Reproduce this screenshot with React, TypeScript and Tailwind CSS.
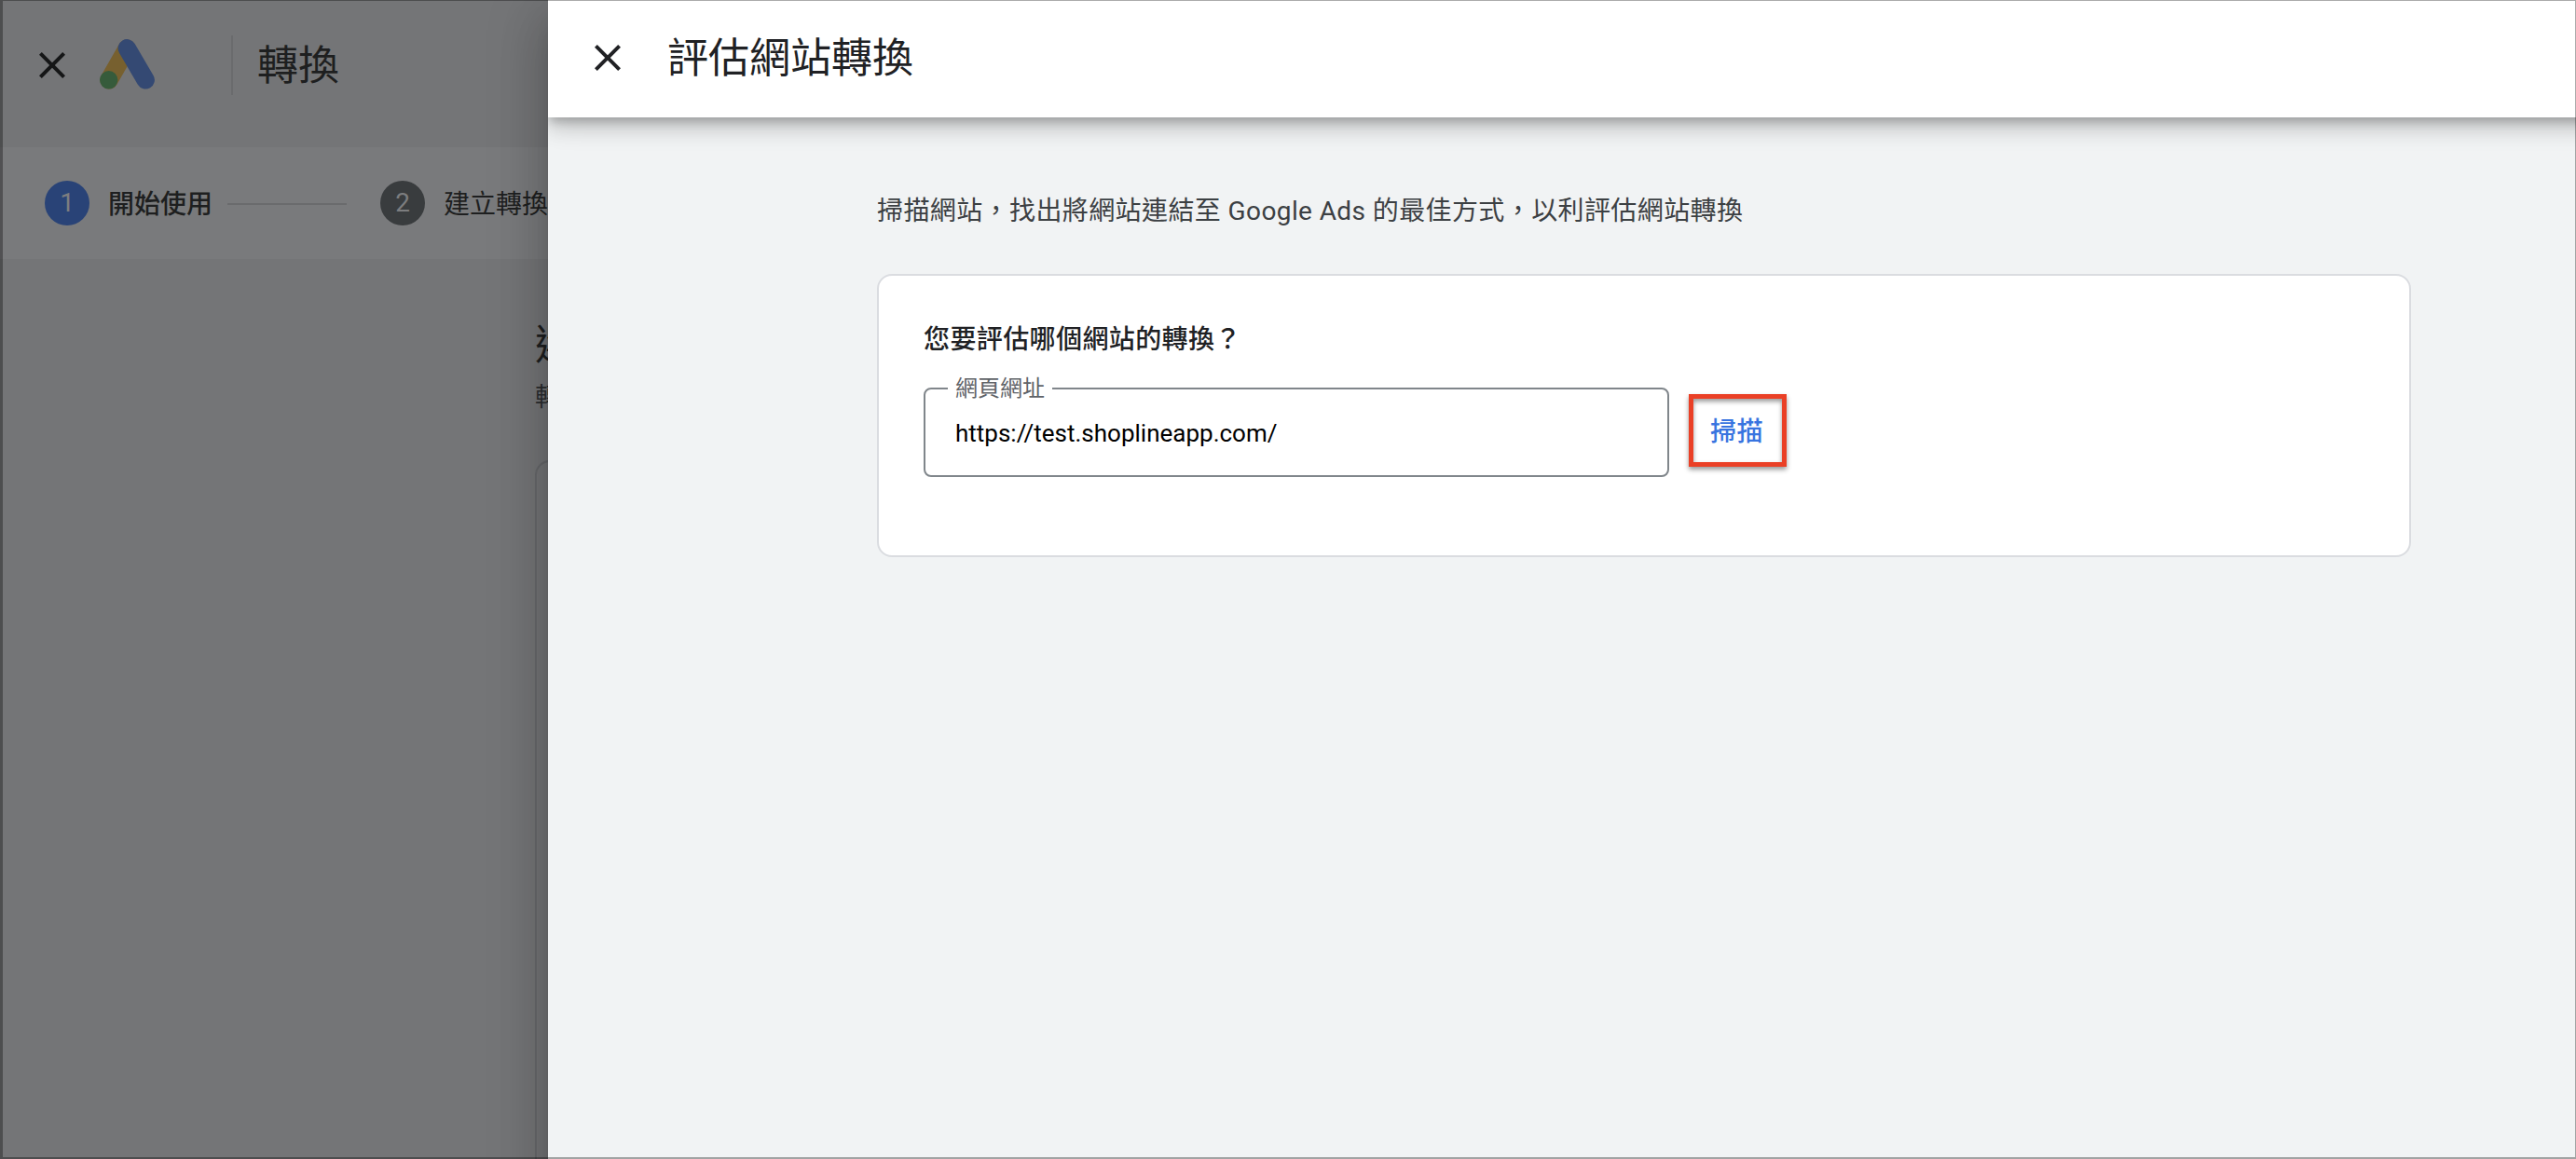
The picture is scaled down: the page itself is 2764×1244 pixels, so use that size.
import clsx from "clsx";

const steps = [
  { id: 1, label: "開始使用", active: true },
  { id: 2, label: "建立轉換", active: false },
];

function CloseIcon({ className }: { className?: string }) {
  return (
    <svg viewBox="0 0 24 24" className={clsx("w-12 h-12 shrink-0", className)} fill="currentColor">
      <path d="M19 6.41L17.59 5 12 10.59 6.41 5 5 6.41 10.59 12 5 17.59 6.41 19 12 13.41 17.59 19 19 17.59 13.41 12z" />
    </svg>
  );
}

function AdsLogo() {
  return (
    <svg viewBox="0 0 60 54" className="w-[60px] h-[54px] shrink-0" fill="none" strokeLinecap="round">
      <path d="M29.3 10.2L10 43.8" stroke="#77602f" strokeWidth="19.4" />
      <path d="M29.3 9.8L49.2 43.8" stroke="#344973" strokeWidth="19.4" />
      <circle cx="9.7" cy="43.8" r="9.7" fill="#365b3b" />
    </svg>
  );
}

function BackgroundPage() {
  return (
    <div className="w-[588px] shrink-0 h-full overflow-hidden">
      <header className="h-[158px] flex items-start">
        <CloseIcon className="ml-8 mt-[46px] text-[#151617]" />
        <div className="ml-[27px] mt-[42px]">
          <AdsLogo />
        </div>
        <div className="ml-[81px] mt-[38px] w-0.5 h-16 bg-[#6a6b6d]" />
        <h1 className="ml-[26px] mt-[39px] text-[44px] leading-[64px] whitespace-nowrap text-[#1e1f20]">轉換</h1>
      </header>

      <div className="h-[120px] pl-12 flex items-center bg-[#797a7c]">
        {steps.map((step, index) => (
          <div key={step.id} className="flex items-center shrink-0">
            {index > 0 && <div className="ml-4 mr-9 mt-0.5 w-32 h-0.5 bg-[#6a6b6d]" />}
            <div
              className={clsx(
                "w-12 h-12 rounded-full flex items-center justify-center text-[28px] leading-none text-[#7c7d7f]",
                step.active ? "bg-[#294377]" : "bg-[#393c3e]"
              )}
            >
              {step.id}
            </div>
            <span
              className={clsx(
                "ml-5 pt-1 text-[28px] leading-10 whitespace-nowrap text-[#1e1f20]",
                step.active && "font-medium"
              )}
            >
              {step.label}
            </span>
          </div>
        ))}
      </div>

      <main className="pl-[574px] pt-[61px] whitespace-nowrap">
        <h2 className="text-[44px] leading-[64px] text-[#1e1f20]">選擇</h2>
        <p className="mt-1 text-[28px] leading-10 text-[#2b2d2f]">轉換</p>
        <div className="mt-[47px] w-[1600px] h-[900px] rounded-2xl border-2 border-[#67686b]" />
      </main>
    </div>
  );
}

function UrlField() {
  return (
    <fieldset className="w-[800px] h-[107px] rounded-lg border-2 border-[#80868b] pl-6">
      <legend className="px-2 text-[24px] leading-6 text-[#5f6368] whitespace-nowrap">網頁網址</legend>
      <input
        readOnly
        value="https://test.shoplineapp.com/"
        className="block w-full h-10 mt-4 pl-2 text-[26px] text-black bg-transparent outline-none"
      />
    </fieldset>
  );
}

function Drawer() {
  return (
    <section className="relative flex-1 h-[1300px] bg-[#f1f3f4] shadow-[0_16px_20px_-10px_rgba(0,0,0,0.2),0_32px_48px_4px_rgba(0,0,0,0.14),0_12px_60px_10px_rgba(0,0,0,0.12)]">
      <div className="h-full overflow-hidden">
        <header className="w-[2240px] h-[126px] pl-10 flex items-start bg-white shadow-[0_6px_10px_-2px_rgba(0,0,0,0.2),0_12px_20px_0_rgba(0,0,0,0.14),0_2px_36px_0_rgba(0,0,0,0.12)]">
          <CloseIcon className="mt-[38px] text-[#202124]" />
          <h1 className="ml-10 mt-[31px] text-[44px] leading-[64px] text-[#202124]">評估網站轉換</h1>
        </header>

        <div className="ml-[353px] w-[1646px]">
          <p className="pt-[81px] text-[28px] leading-10 tracking-[0.4px] text-[#3c4043]">
            掃描網站，找出將網站連結至 Google Ads 的最佳方式，以利評估網站轉換
          </p>
          <div className="mt-[47px] h-[304px] rounded-2xl border-2 border-[#dadce0] bg-white pl-12">
            <h2 className="pt-[49px] text-[28px] leading-10 tracking-[0.4px] font-medium text-[#202124]">
              您要評估哪個網站的轉換？
            </h2>
            <div className="mt-5 flex items-start">
              <UrlField />
              <button className="ml-[21px] mt-[18px] w-[105px] h-[78px] pt-1 pr-0.5 border-[5px] border-[#ea4026] text-[28px] leading-10 tracking-[0.4px] font-medium text-[#3874e0] whitespace-nowrap shadow-[0_3px_5px_rgba(0,0,0,0.4),inset_0_3px_5px_rgba(0,0,0,0.4)]">
                掃描
              </button>
            </div>
          </div>
        </div>
      </div>
    </section>
  );
}

export default function App() {
  return (
    <div
      lang="zh-TW"
      className="relative w-[2764px] h-[1244px] overflow-hidden flex bg-[#747577] font-['Roboto','Noto_Sans_CJK_TC',sans-serif]"
    >
      <BackgroundPage />
      <Drawer />
      {/* window edge */}
      <div className="absolute inset-0 pointer-events-none border-t border-r border-b-2 border-l-[3px] border-black/[0.33]" />
    </div>
  );
}
